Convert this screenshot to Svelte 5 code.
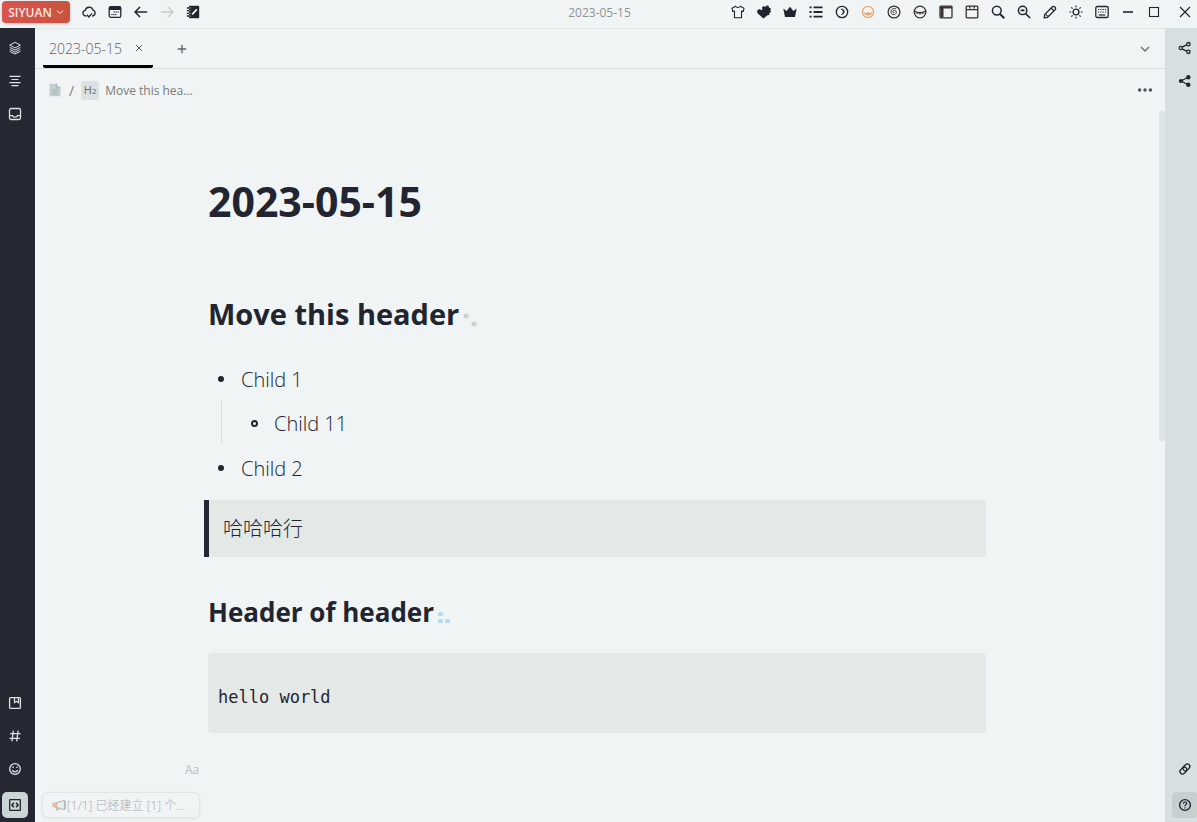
<script>
  const icons = {
    cloud: '<path d="M4.2 11H3.6A2.9 2.9 0 0 1 3.2 5.3 4 4 0 0 1 10.9 5 3.1 3.1 0 0 1 10.6 11h-.5M4.8 9.8 6.8 12l3.2-3.6"/>',
    calendar: '<rect x="1.2" y="1.7" width="11.6" height="10.6" rx="1.6"/><rect x="1" y="1.5" width="12" height="3.5" rx="1" fill="currentColor" stroke="none"/><path d="M5.6 7h5.2M3.2 9.6h5.4" stroke-width="1" stroke-dasharray="1.4 .5"/>',
    left: '<path d="M13.2 7H1.2M6 2 1 7l5 5" stroke-width="1.5"/>',
    right: '<path d="M.8 7h12M8 2l5 5-5 5" stroke-width="1.4"/>',
    note: '<path d="M3 .8h9.2a1 1 0 0 1 1 1v10.4a1 1 0 0 1-1 1H3z" fill="currentColor" stroke="none"/><path d="M.8 3h3M.8 5.7h3M.8 8.4h3M.8 11h3" stroke-width="1.3"/><path d="M3.5 3h1M3.5 5.7h1M3.5 8.4h1M3.5 11h1" stroke="#f0f4f5" stroke-width="1"/><path d="m6.2 9.4 4.6-5" stroke="#f0f4f5" stroke-width="1.7"/>',
    shirt: '<path d="M4.6 1.3 1 3.2l.7 3.1 1.8-.2v6.6h7V6.1l1.8.2.7-3.1-3.6-1.9c-.8 1.5-4 1.5-4.8 0z" stroke-width="1.1"/>',
    heart: '<path d="M6.4 13.6.8 8.4C-.6 6.6.3 4.2 2.4 4.2c.9 0 1.4.5 1.8 1L5.6 4 4.7 2.8 6.6.9l1.6 1.2L9.5.6l2 .2.5 1.8 1.9.9-.5 1.9.6 1.3-1.6 1.5.1 1.5-2.4.9z" fill="currentColor" stroke="none"/>',
    crown: '<path d="M.3 3.5 3.6 6 7 1.7 10.4 6l3.3-2.5L12 12H2z" fill="currentColor" stroke="none"/>',
    list: '<path d="M4.5 2.3h9M4.5 7h9M4.5 11.7h9" stroke-width="1.8"/><path d="M.5 2.3h2M.5 7h2M.5 11.7h2" stroke-width="1.8"/>',
    moon: '<circle cx="7" cy="7" r="5.7"/><path d="M6 4.1c3.7-.6 4.9 4.8.3 5.6C9 8.2 8.7 5.2 6 4.1z" fill="currentColor" stroke-width=".6"/>',
    smile: '<circle cx="7" cy="7" r="5.6"/><path d="M2.3 6.2c1.5 2.4 3.3 2.2 4.7.5 1.4 1.7 3.2 1.5 4.7-.5-.1 5.5-9 6-9.4 0z" fill="currentColor" stroke="none"/>',
    spiral: '<circle cx="7" cy="7" r="5.9"/><path d="M7.3 7.5c-1 .7-2.2-1-.7-1.9 1.8-1 3.6 1.2 2.3 3C7.5 10.6 4 9.5 4 6.8c0-2.8 3-4.1 5.2-2.9" stroke-width="1"/>',
    sleepy: '<circle cx="7" cy="7" r="5.8"/><path d="M1.6 6.2c3 2 7.8 2 10.8 0M4.3 7.6 3.9 9M7 8v1.8M9.7 7.6l.4 1.4" stroke-width="1.2"/>',
    sidebar: '<rect x="1" y="1.2" width="12" height="11.6" rx=".8"/><path d="M1 2.5h12" stroke-width="2"/><path d="M3 3v9.5" stroke-width="3"/>',
    window: '<rect x="1.2" y="1.2" width="11.6" height="11.6" rx=".8"/><path d="M1.2 4.6h11.6M4.8 1v2.6M9.2 1v2.6"/>',
    search: '<circle cx="5.8" cy="5.6" r="4.4" stroke-width="1.5"/><path d="m9 9 4.3 4.2" stroke-width="1.9"/>',
    zoomout: '<circle cx="5.6" cy="5.4" r="4.2" stroke-width="1.5"/><path d="M3.7 5.4h3.8M8.8 8.8l4.4 4.2" stroke-width="1.6"/>',
    pencil: '<path d="m1.2 12.8.5-3.3 7.7-7.7c1.5-1.3 4.1 1 2.8 2.8l-7.7 7.7zM8.4 3.2l2.5 2.5M3 9.6l1.4 1.4"/>',
    sun: '<circle cx="7" cy="7" r="2.9" stroke-width="1.4"/><path d="M7 .4v1.8M7 11.8v1.8M.4 7h1.8M11.8 7h1.8M2.3 2.3l1.3 1.3M10.4 10.4l1.3 1.3M2.3 11.7l1.3-1.3M10.4 3.6l1.3-1.3" stroke-width="1.2"/>',
    keyboard: '<rect x=".8" y="1.5" width="12.4" height="11" rx="1.6"/><path d="M3 4.5h8.5M3 7h8.5" stroke-dasharray="1.2 1.1" stroke-width="1.2"/><path d="M3.8 10h6.4" stroke-width="1.2"/>',
    min: '<path d="M2 7h10" stroke-width="1.6"/>',
    max: '<rect x="2.5" y="2.5" width="9" height="9" stroke-width="1.1"/>',
    close: '<path d="m2 2 10 10M12 2 2 12" stroke-width="1.2"/>',
    layers: '<path d="m7 1.3 5.3 2.8L7 6.9 1.7 4.1zM1.7 6.3 7 9.1l5.3-2.8M1.7 8.4 7 11.2l5.3-2.8M1.7 10.4 7 13l5.3-2.6" stroke-width="1"/>',
    outline: '<path d="M1.5 2.4h11M3.5 5.5h7M1.5 8.6h11M3.5 11.7h7" stroke-width="1.2"/>',
    inbox: '<rect x="1.5" y="1.5" width="11" height="11" rx="1.5"/><path d="M1.7 8.7h2.8c.4 2 4.6 2 5 0h2.8"/>',
    bookmark: '<rect x="1.6" y="1.6" width="10.8" height="10.8" rx="1"/><path d="M6.5 2v4.7l2-1.4 2 1.4V2" stroke-width="1.2"/>',
    tag: '<path d="M5.3 1.6 3.9 12.4M10.1 1.6 8.7 12.4M2.1 4.7h10.4M1.5 9.3h10.4"/>',
    emoji: '<circle cx="7" cy="7" r="5.3"/><path d="M4.3 8c.7 2.4 4.7 2.4 5.4 0" stroke-width="1.2"/><path d="M4.4 5.3h1.3M8.3 5.3h1.3" stroke-width="1.4"/>',
    code: '<rect x="1.7" y="1.7" width="10.6" height="10.6" rx=".4"/><path d="M5.9 4.8 4 7l1.9 2.2M8.1 4.8 10 7 8.1 9.2" stroke-width="1.6"/>',
    graph: '<path d="m4 6.1 4.6-2.3M4 7.9l4.6 2.3"/><circle cx="2.8" cy="7" r="1.6"/><circle cx="10.4" cy="3.2" r="1.7"/><circle cx="10.4" cy="10.8" r="1.7"/>',
    share: '<path d="m3 7 7-3.8M3 7l7 3.8"/><g fill="currentColor" stroke="none"><circle cx="2.9" cy="7" r="2.1"/><circle cx="10.3" cy="3.2" r="2.2"/><circle cx="10.3" cy="10.8" r="2.2"/></g>',
    link: '<rect x="5.9" y="1.6" width="5" height="7.6" rx="2.5" transform="rotate(45 8.4 5.4)"/><rect x="2.9" y="4.8" width="5" height="7.6" rx="2.5" transform="rotate(45 5.4 8.6)"/>',
    help: '<circle cx="7" cy="7" r="5.4" stroke-width="1.4"/><path d="M5.3 5.7C5.4 3.6 8.8 3.7 8.7 5.7 8.6 6.9 7 6.8 7 8.2M7 9.2v1.2" stroke-width="1.2"/>',
    down: '<path d="m3 5 4 4 4-4" stroke-width="1.4"/>',
    cross: '<path d="m4 4 6 6M10 4l-6 6" stroke-width="1"/>',
    plus: '<path d="M7 2.8v8.4M2.8 7h8.4" stroke-width="1.3"/>',
    more: '<g fill="currentColor" stroke="none"><circle cx="1.6" cy="7" r="1.7"/><circle cx="7" cy="7" r="1.7"/><circle cx="12.4" cy="7" r="1.7"/></g>',
    doc: '<path d="M1.5.8h7l4 3.8v8.6h-11z" fill="#c3cfd0" stroke="none"/><path d="M8.5.8v4h4M4 6.8h6M4 9h6M4 11h6" stroke="#a9b8ba" stroke-width="1"/>',
    horn: '<path d="M4.5 4.8 12.4 2.4v9.2L4.5 9.4z" fill="#eceeec" stroke="#b5bab8" stroke-width="1"/><path d="M.8 5.4 5 4.4v5.4L.8 8.8z" fill="#f0b896" stroke="#c9b9ac" stroke-width=".6"/><path d="M4.4 9.6v2.2h2.4v-1.5M12.6 2.2c1.2 2.6 1.2 7 0 9.6" stroke="#aaafad" stroke-width="1"/>'
  };
  const toolsLeft = [
    ['cloud', 'Sync'], ['calendar', 'Daily note'], ['left', 'Back'],
    ['right', 'Forward', 'dim'], ['note', 'Notebook']
  ];
  const toolsRight = [
    ['shirt', 'Theme'], ['heart', 'Plugins'], ['crown', 'Premium'], ['list', 'List'],
    ['moon', 'Night'], ['smile', 'Warm', 'orange'], ['spiral', 'Spiral', 'brown'],
    ['sleepy', 'Rest', 'brown'], ['sidebar', 'Sidebar', 'brown'], ['window', 'Tabs', 'brown'],
    ['search', 'Search'], ['zoomout', 'Zoom out'], ['pencil', 'Edit'], ['sun', 'Appearance'],
    ['keyboard', 'Shortcuts'], ['min', 'Minimize'], ['max', 'Maximize']
  ];
</script>

{#snippet icon(name)}
  <svg class="icon" viewBox="0 0 14 14" aria-hidden="true" fill="none" stroke="currentColor" stroke-width="1.3">{@html icons[name]}</svg>
{/snippet}

{#snippet tool(name, label, tone = '')}
  <button class="tool {tone}" type="button" aria-label={label}>{@render icon(name)}</button>
{/snippet}

<div class="app">
  <header class="topbar">
    <div class="group">
      <button class="brand" type="button">SIYUAN <svg viewBox="0 0 8 8" aria-hidden="true"><path d="m1 2.5 3 3 3-3" fill="none" stroke="currentColor" /></svg></button>
      {#each toolsLeft as [name, label, tone]}{@render tool(name, label, tone)}{/each}
    </div>
    <span class="title">2023-05-15</span>
    <div class="group end">
      {#each toolsRight as [name, label, tone]}{@render tool(name, label, tone)}{/each}
      <button class="tool exit" type="button" aria-label="Close">{@render icon('close')}</button>
    </div>
  </header>

  <div class="main">
    <nav class="dock dark" aria-label="Left dock">
      {@render tool('layers', 'Files')}
      {@render tool('outline', 'Outline')}
      {@render tool('inbox', 'Inbox')}
      <span class="space"></span>
      {@render tool('bookmark', 'Bookmarks')}
      {@render tool('tag', 'Tags')}
      {@render tool('emoji', 'Emoji')}
      {@render tool('code', 'Dock', 'active')}
    </nav>

    <main class="pane">
      <div class="tabs">
        <div class="tab">
          <span>2023-05-15</span>
          <button class="mini" type="button" aria-label="Close tab">{@render icon('cross')}</button>
        </div>
        <button class="mini add" type="button" aria-label="New tab">{@render icon('plus')}</button>
        <span class="space"></span>
        <button class="mini chevron" type="button" aria-label="Tab list">{@render icon('down')}</button>
      </div>

      <div class="crumbs">
        <span class="file">{@render icon('doc')}</span>
        <span class="slash">/</span>
        <span class="level">H<small>2</small></span>
        <a href="#move">Move this hea...</a>
        <span class="space"></span>
        <button class="mini more" type="button" aria-label="More">{@render icon('more')}</button>
      </div>

      <div class="scroller">
        <article>
          <h1>2023-05-15</h1>
          <h2 id="move">Move this header<svg class="mark" viewBox="0 0 14 14" aria-hidden="true" fill="#ccd4d3"><circle cx="3" cy="3" r="2.5" /><circle cx="11" cy="11" r="2.5" /></svg></h2>
          <ul>
            <li>Child 1
              <ul><li>Child 11</li></ul>
            </li>
            <li>Child 2</li>
          </ul>
          <blockquote>哈哈哈行</blockquote>
          <h3>Header of header<svg class="mark" viewBox="0 0 14 14" aria-hidden="true" fill="#b3dbec"><rect x="1" y="3" width="5" height="4" rx="1.5" /><rect x="1" y="10" width="5" height="4" rx="1.5" /><rect x="8" y="10" width="5" height="4" rx="1.5" /></svg></h3>
          <pre><code>hello world</code></pre>
          <p class="empty"><span>Aa</span></p>
        </article>
        <div class="track"><div class="thumb"></div></div>
      </div>

      <div class="status">{@render icon('horn')}<span>[1/1] 已经建立 [1] 个...</span></div>
    </main>

    <nav class="dock light" aria-label="Right dock">
      {@render tool('graph', 'Graph')}
      {@render tool('share', 'Global graph')}
      <span class="space"></span>
      {@render tool('link', 'Backlinks')}
      {@render tool('help', 'Help', 'active')}
    </nav>
  </div>
</div>

<style>
  :global(body) {
    margin: 0;
  }
  .app {
    display: flex;
    flex-direction: column;
    height: 100vh;
    overflow: hidden;
    background: #f0f4f5;
    color: #22252f;
    font-family: "Open Sans", "Noto Sans CJK SC", sans-serif;
    font-size: 12px;
  }
  button {
    display: flex;
    align-items: center;
    justify-content: center;
    padding: 0;
    border: 0;
    background: none;
    color: inherit;
    font: inherit;
  }
  .icon {
    display: block;
    width: 14px;
    height: 14px;
    flex: none;
  }
  .space {
    flex: 1;
  }
  .topbar {
    display: grid;
    grid-template-columns: 1fr auto 1fr;
    align-items: start;
    height: 28px;
    flex: none;
  }
  .group {
    display: flex;
    align-items: center;
    height: 24px;
  }
  .end {
    justify-content: flex-end;
  }
  .title {
    padding-left: 2px;
    color: #8d9496;
    line-height: 26px;
  }
  .brand {
    gap: 4px;
    width: 68px;
    height: 22px;
    margin: 0 6px 0 2px;
    border-radius: 4px;
    background: linear-gradient(100deg, #d9534f, #c9533f);
    box-shadow: 0 1px 3px #0003;
    color: #fbeae0;
    font-weight: 600;
  }
  .brand svg {
    width: 8px;
    height: 8px;
  }
  .tool {
    width: 26px;
    height: 26px;
    flex: none;
    border-radius: 5px;
  }
  .dim {
    color: #c5cacc;
  }
  .orange {
    color: #eba872;
  }
  .brown {
    color: #37312f;
  }
  .exit {
    margin-left: 5px;
    margin-right: -1px;
  }
  .main {
    display: flex;
    flex: 1;
    min-height: 0;
  }
  .dock {
    display: flex;
    flex-direction: column;
    gap: 7px;
    box-sizing: border-box;
    flex: none;
    padding: 7px 0 4px;
  }
  .dock .active {
    margin-top: 3px;
  }
  .dark {
    width: 35px;
    padding-left: 2px;
    background: #252832;
    color: #dce3e4;
  }
  .dark .active {
    background: #cbd5d6;
    color: #22252f;
  }
  .light {
    width: 32px;
    padding-left: 7px;
    background: #d7dfe0;
    overflow: hidden;
  }
  .light .active {
    background: #c7cfd0;
  }
  .pane {
    position: relative;
    display: flex;
    flex-direction: column;
    flex: 1;
    min-width: 0;
    border-top: 1px solid #e0e5e6;
  }
  .tabs {
    display: flex;
    height: 39px;
    flex: none;
    padding: 0 13px 0 8px;
    border-bottom: 1px solid #d9dfe0;
    color: #5e6366;
  }
  .tab {
    display: flex;
    align-items: center;
    gap: 10px;
    box-sizing: border-box;
    padding: 2px 7px 0 6px;
    border-bottom: 3px solid #000;
    border-radius: 2px;
    color: #5e6366;
    font-size: 14px;
    font-weight: 300;
  }
  .mini {
    width: 14px;
  }
  .add {
    margin-left: 22px;
  }
  .chevron {
    color: #6d7174;
  }
  .crumbs {
    display: flex;
    align-items: center;
    height: 42px;
    flex: none;
    padding: 0 13px;
    color: #777d78;
  }
  .slash {
    margin: 0 7px;
    font-size: 14px;
  }
  .level {
    width: 18px;
    margin-right: 6px;
    border-radius: 3px;
    background: #dce2e2;
    color: #656b6e;
    font-size: 11px;
    line-height: 18px;
    text-align: center;
  }
  .level small {
    font-size: 8px;
  }
  .crumbs a {
    color: inherit;
    text-decoration: none;
  }
  .more {
    color: #50535c;
  }
  .scroller {
    display: flex;
    flex: 1;
    min-height: 0;
    overflow: hidden;
  }
  article {
    flex: 1;
    max-width: 778px;
    margin: 0 auto;
    font-size: 20px;
    font-weight: 300;
  }
  h1,
  h2,
  h3 {
    margin: 0;
    font-weight: 700;
  }
  h1 {
    padding-top: 60px;
    font-size: 41px;
    line-height: 60px;
  }
  h2 {
    padding-top: 61px;
    font-size: 29px;
    line-height: 44px;
  }
  h3 {
    padding-top: 35px;
    font-size: 26px;
    line-height: 40px;
  }
  .mark {
    width: 14px;
    height: 14px;
    margin-left: 4px;
    vertical-align: -2px;
  }
  h3 .mark {
    margin-left: 3px;
    vertical-align: -1px;
  }
  ul {
    margin: 0;
    padding: 0;
    list-style: none;
  }
  article > ul {
    padding: 22px 0 9px;
  }
  li {
    position: relative;
    padding-left: 33px;
    line-height: 44px;
  }
  article > ul > li + li {
    margin-top: 1px;
  }
  li::before {
    content: "";
    position: absolute;
    top: 18px;
    left: 10px;
    width: 6px;
    height: 6px;
    border-radius: 50%;
    background: #22252f;
  }
  li li::before {
    box-sizing: border-box;
    width: 7px;
    height: 7px;
    border: 2px solid #22252f;
    background: #f0f4f5;
  }
  li ul::before {
    content: "";
    position: absolute;
    top: 42px;
    bottom: 2px;
    left: 13px;
    width: 1px;
    background: #d9dfe0;
  }
  blockquote {
    margin: 0 0 0 -4px;
    padding: 14px;
    border-left: 5px solid #252832;
    border-radius: 0 4px 4px 0;
    background: #e4e9e8;
    line-height: 29px;
  }
  pre {
    margin: 21px 0 0;
    padding: 32px 10px 24px;
    border-radius: 4px;
    background: #e4e9e8;
    font-weight: 400;
    line-height: 23px;
  }
  code {
    font-family: "DejaVu Sans Mono", monospace;
    font-size: 17px;
  }
  .empty {
    margin: 25px 0 0 -23px;
    color: #b9c1c2;
    font-size: 12px;
    font-weight: 400;
    line-height: 24px;
  }
  .track {
    width: 6px;
  }
  .thumb {
    height: 46%;
    min-height: 330px;
    border-radius: 3px;
    background: #dfe5e5;
  }
  .status {
    position: absolute;
    bottom: 4px;
    left: 7px;
    display: flex;
    align-items: center;
    gap: 1px;
    box-sizing: border-box;
    width: 158px;
    height: 26px;
    padding: 0 9px;
    border: 1px solid #e0e5e6;
    border-radius: 6px;
    background: #f0f4f5;
    box-shadow: 0 1px 3px #0001;
    color: #a6abad;
    font-weight: 300;
    white-space: nowrap;
  }
</style>
